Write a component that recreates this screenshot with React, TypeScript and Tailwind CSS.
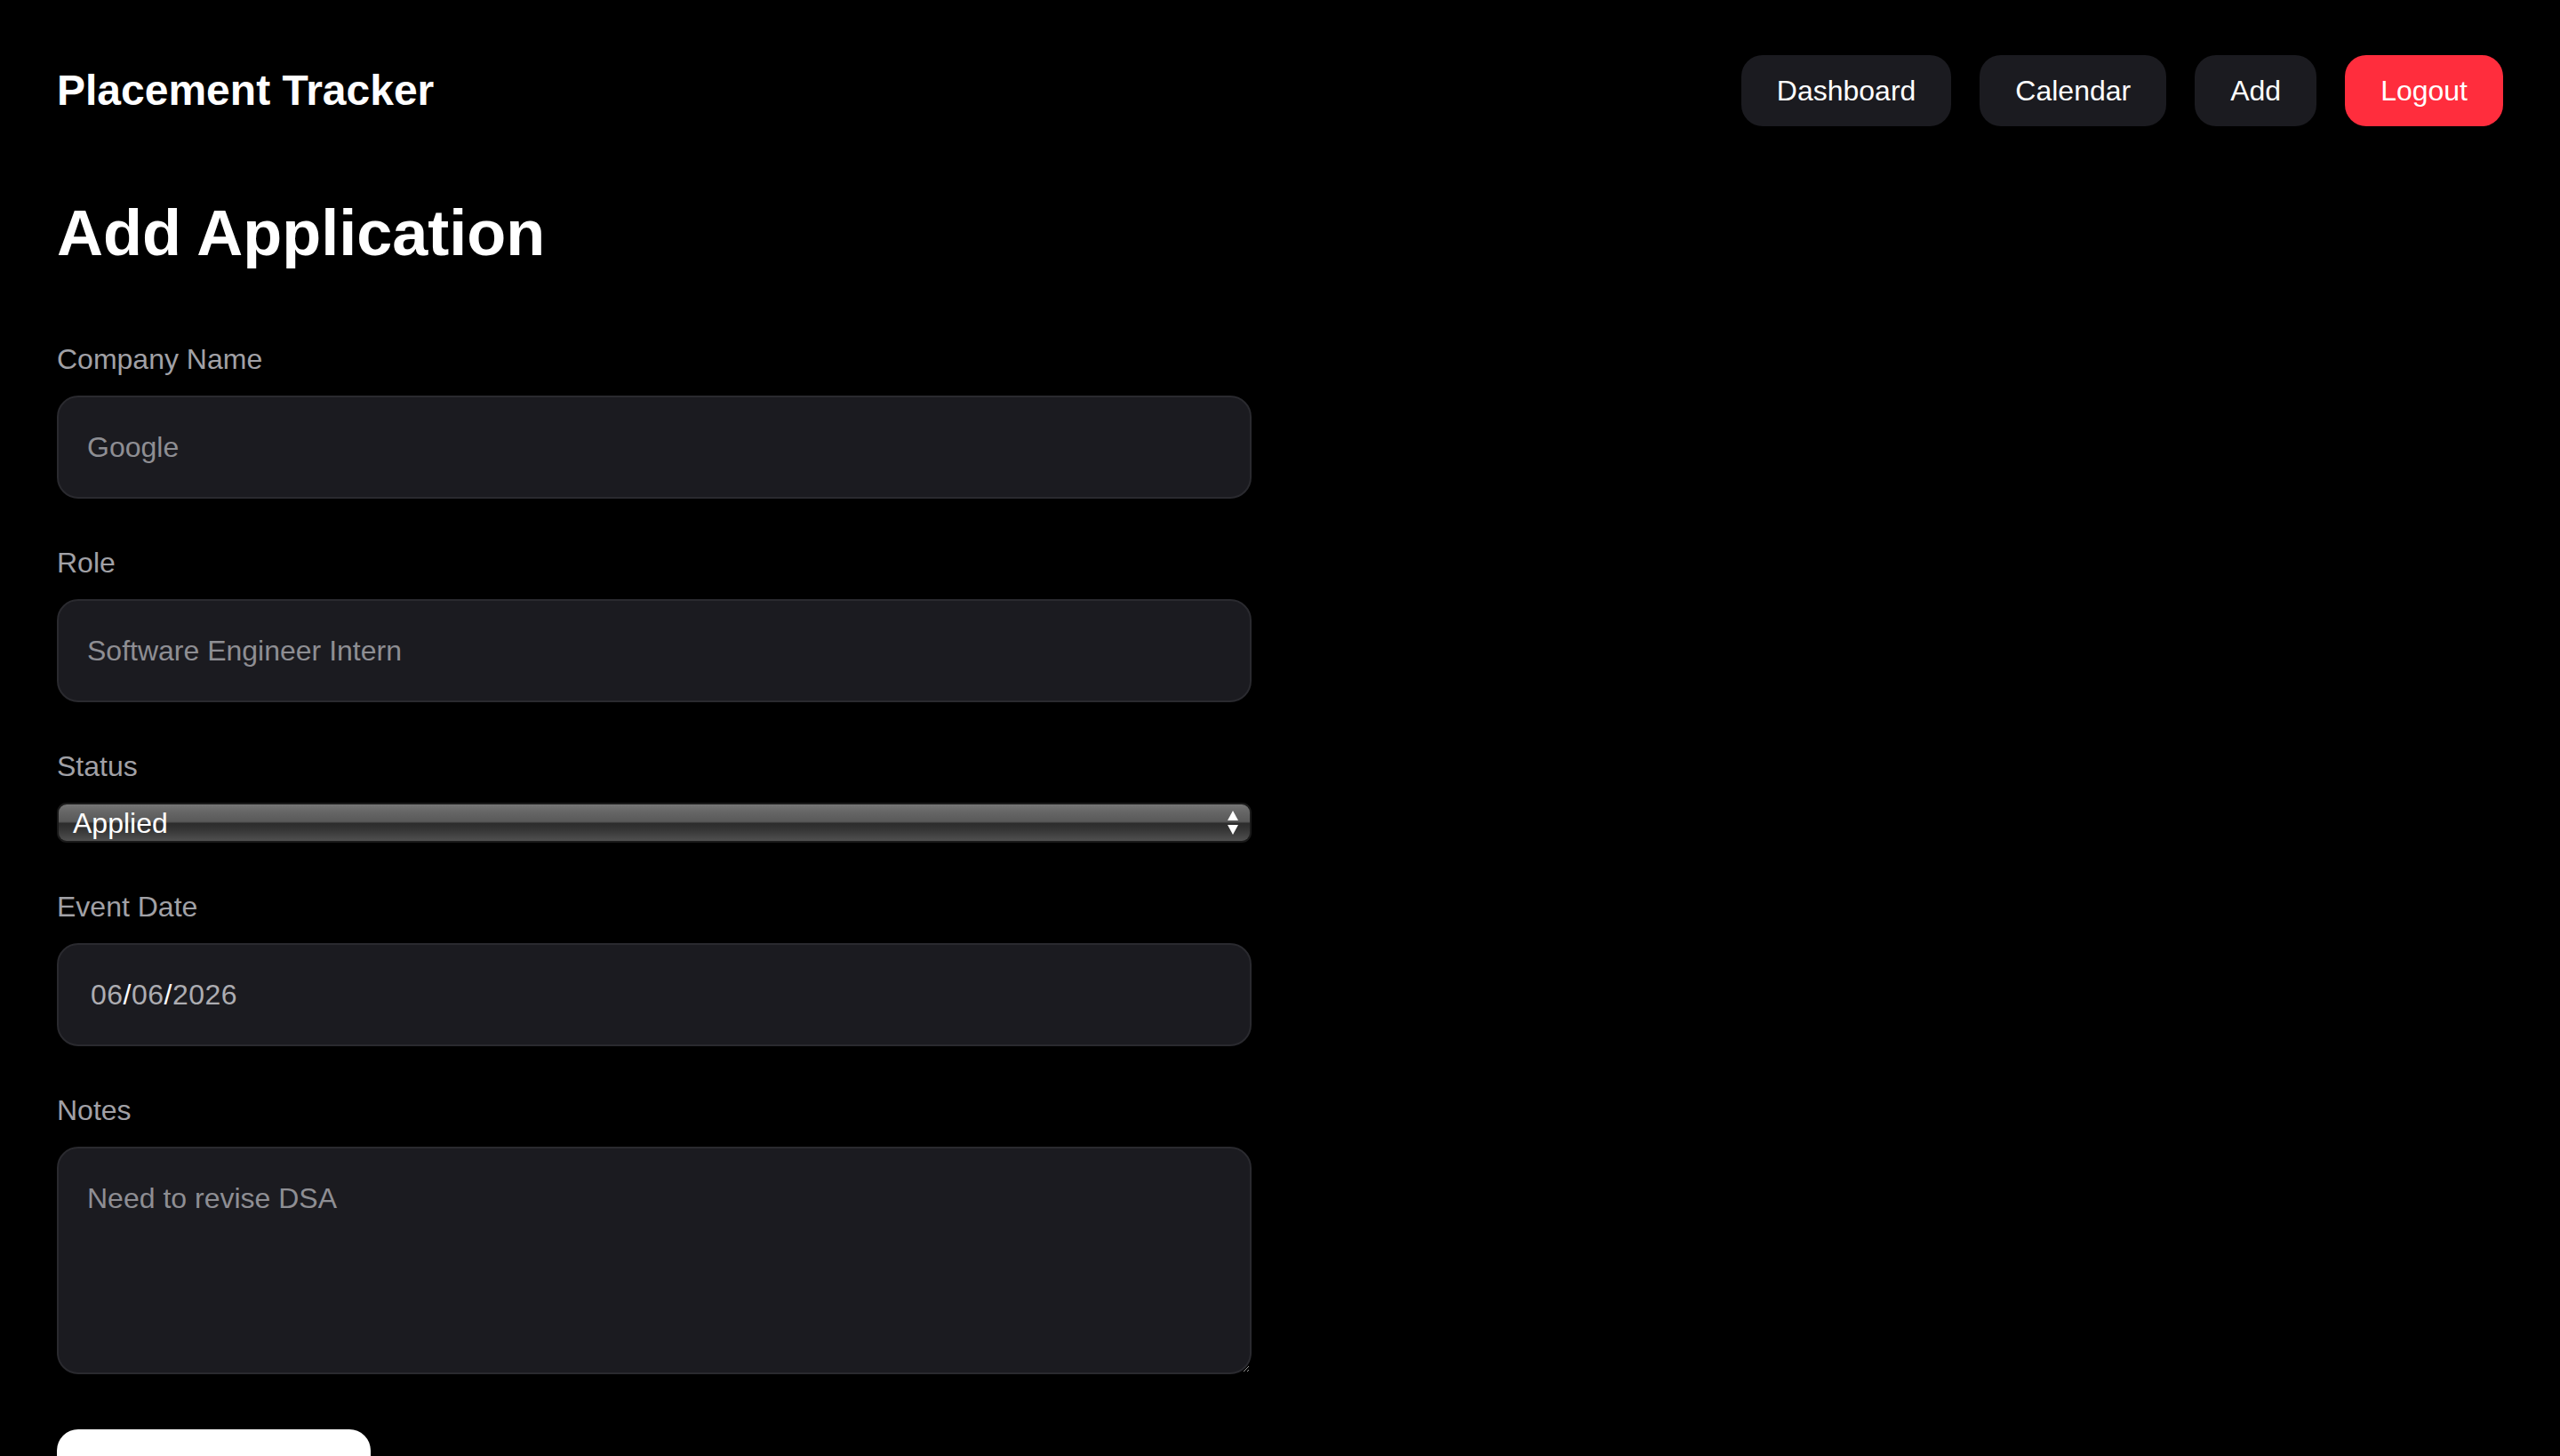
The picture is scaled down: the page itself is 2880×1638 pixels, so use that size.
import React from "react";

const font = { fontFamily: '"Liberation Sans", Arial, Helvetica, sans-serif' };

const navItems = ["Dashboard", "Calendar", "Add"];

function Field({ label, children }: { label: string; children: React.ReactNode }) {
  return (
    <div className="flex flex-col">
      <label className="mb-[17px] text-[32px] leading-[48px] text-[#a1a1a6]">{label}</label>
      {children}
    </div>
  );
}

const inputClass =
  "w-full h-[116px] px-8 rounded-3xl border-2 border-[#2a2a2f] bg-[#1b1b20] text-[32px] text-[#d4d4d8] placeholder:text-[#8e8e93] outline-none";

// mimics the glossy native select of the browser
function StatusSelect() {
  return (
    <div className="h-[45px] rounded-[11px] bg-[#1a1a1a] p-[2px]">
      <div className="h-full rounded-[9px] flex items-center justify-between pl-[16px] pr-[12px] bg-[linear-gradient(to_bottom,#767676_0%,#666666_20%,#595959_47%,#2c2c2c_52%,#363636_70%,#505050_100%)]">
        <span className="text-[32px] leading-none text-white">Applied</span>
        <svg width="14" height="30" viewBox="0 0 14 30" className="shrink-0">
          <path d="M7 1 L13 12 L1 12 Z" fill="#ffffff" />
          <path d="M1 17 L13 17 L7 28 Z" fill="#ffffff" />
        </svg>
      </div>
    </div>
  );
}

function DateValue() {
  const parts = ["06", "06", "2026"];
  return (
    <div className="w-full h-[116px] pl-[36px] pr-8 rounded-3xl border-2 border-[#2a2a2f] bg-[#1b1b20] text-[32px] tracking-[0.5px] flex items-center">
      {parts.map((p, i) => (
        <React.Fragment key={i}>
          <span className="text-[#adadb2]">{p}</span>
          {i < parts.length - 1 && <span className="text-white">/</span>}
        </React.Fragment>
      ))}
    </div>
  );
}

export default function App() {
  return (
    <div className="min-h-screen bg-black px-16 text-white" style={font}>
      <header className="pt-[62px] h-[142px] flex items-center justify-between">
        <h2 className="text-[48px] leading-[64px] font-bold">Placement Tracker</h2>
        <nav className="flex items-center gap-8">
          {navItems.map((item) => (
            <button
              key={item}
              className="h-20 px-10 rounded-3xl bg-[#1b1b20] text-[32px] leading-[48px] text-white"
            >
              {item}
            </button>
          ))}
          <button className="h-20 px-10 rounded-3xl bg-[#ff2d3d] text-[32px] leading-[48px] text-white">
            Logout
          </button>
        </nav>
      </header>

      <h1 className="mt-[80px] text-[72px] leading-[80px] font-bold">Add Application</h1>

      <form className="mt-[78px] max-w-[1344px] flex flex-col gap-12">
        <Field label="Company Name">
          <input className={inputClass} placeholder="Google" />
        </Field>
        <Field label="Role">
          <input className={inputClass} placeholder="Software Engineer Intern" />
        </Field>
        <Field label="Status">
          <StatusSelect />
        </Field>
        <Field label="Event Date">
          <DateValue />
        </Field>
        <Field label="Notes">
          <textarea
            className="w-full h-[256px] p-8 rounded-3xl border-2 border-[#2a2a2f] bg-[#1b1b20] text-[32px] leading-[48px] text-[#d4d4d8] placeholder:text-[#8e8e93] outline-none"
            placeholder="Need to revise DSA"
          />
        </Field>
        <div className="pt-[14px] pb-16">
          <button
            type="button"
            className="h-[88px] px-12 rounded-3xl bg-white text-black text-[32px] font-bold"
          >
            Save Application
          </button>
        </div>
      </form>
    </div>
  );
}
